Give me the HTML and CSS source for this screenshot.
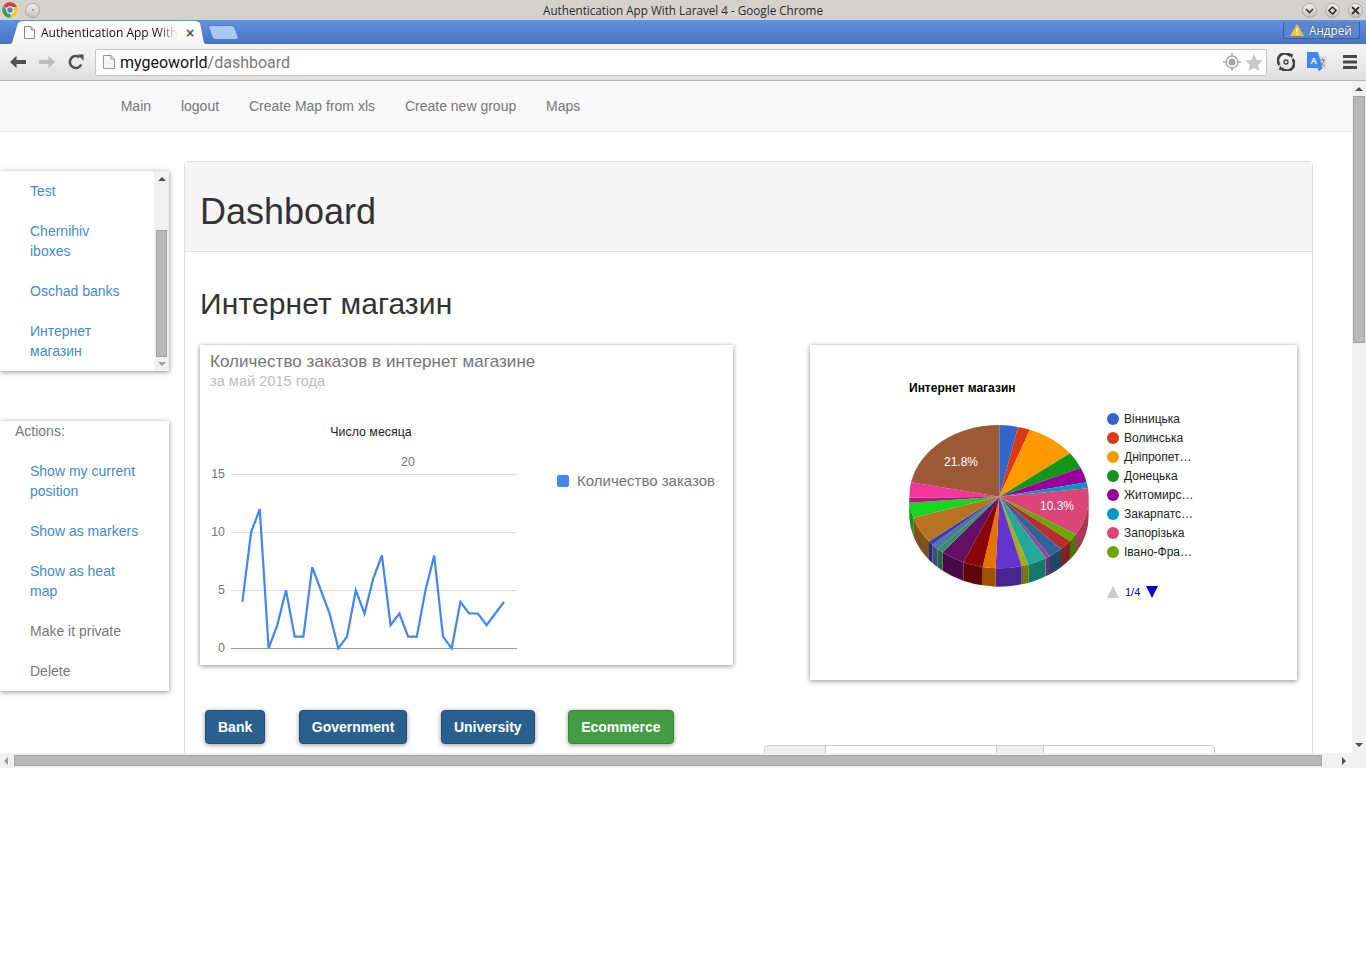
FILE: index.html
```html
<!DOCTYPE html>
<html lang="ru">
<head>
  <meta charset="UTF-8">
  <title>Authentication App With Laravel 4</title>
  <link rel="stylesheet" href="styles.css">
</head>
<body>
  <div class="titlebar">
    <div class="title-side">
      <svg class="chrome-logo" width="16" height="16" viewBox="0 0 16 16">
        <path d="M8 8 L1.5 4 A7.6 7.6 0 0 1 15 5 L8 5 Z" fill="#d9412f"/>
        <path d="M8 8 L15 5 A7.6 7.6 0 0 1 8.5 15.6 L11 9 Z" fill="#f6c731"/>
        <path d="M8 8 L8.5 15.6 A7.6 7.6 0 0 1 1.5 4 L5 9.5 Z" fill="#3f9d4a"/>
        <circle cx="8" cy="8" r="3.7" fill="#fff"/>
        <circle cx="8" cy="8" r="2.8" fill="#4a80dd"/>
      </svg>
      <span class="win-btn"><i class="win-dot"></i></span>
    </div>
    <div class="title-text">Authentication App With Laravel 4 - Google Chrome</div>
    <div class="title-side title-right">
      <span class="win-btn">
        <svg width="9" height="9" viewBox="0 0 9 9"><path d="M1 3 L4.5 6.5 L8 3" fill="none" stroke="#333" stroke-width="1.6"/></svg>
      </span>
      <span class="win-btn">
        <svg width="9" height="9" viewBox="0 0 9 9"><path d="M4.5 1 L8 4.5 L4.5 8 L1 4.5 Z" fill="none" stroke="#333" stroke-width="1.6"/></svg>
      </span>
      <span class="win-btn">
        <svg width="9" height="9" viewBox="0 0 9 9"><path d="M1 1 L8 8 M8 1 L1 8" fill="none" stroke="#333" stroke-width="1.8"/></svg>
      </span>
    </div>
  </div>

  <div class="tabstrip">
    <div class="tab">
      <svg width="11" height="13" viewBox="0 0 11 13"><path d="M.5 .5 H7 L10.5 4 V12.5 H.5 Z M7 .5 V4 H10.5" fill="#fff" stroke="#888"/></svg>
      <span class="tab-title">Authentication App With</span>
      <span class="tab-close">×</span>
    </div>
    <div class="newtab"></div>
    <div class="user-badge">
      <svg width="14" height="12" viewBox="0 0 14 12"><path d="M7 0 L14 12 H0 Z" fill="#fbc02d"/><path d="M6.3 4 H7.7 V8 H6.3 Z M6.3 9 H7.7 V10.4 H6.3 Z" fill="#fff"/></svg>
      <span>Андрей</span>
    </div>
  </div>

  <div class="toolbar">
    <span class="tool-btn">
      <svg width="16" height="14" viewBox="0 0 16 14"><path d="M0 7 L6.5 .8 V5 H16 V9 H6.5 V13.2 Z" fill="#505050"/></svg>
    </span>
    <span class="tool-btn">
      <svg width="16" height="14" viewBox="0 0 16 14"><path d="M16 7 L9.5 .8 V5 H0 V9 H9.5 V13.2 Z" fill="#bdbdbd"/></svg>
    </span>
    <span class="tool-btn">
      <svg width="16" height="16" viewBox="0 0 16 16"><path d="M13.3 10.5 A6 6 0 1 1 11.5 3.2" fill="none" stroke="#505050" stroke-width="2.6"/><path d="M9.5 .6 L15.5 .6 L15.5 6.8 Z" fill="#505050"/></svg>
    </span>
    <div class="address">
      <svg width="12" height="14" viewBox="0 0 12 14"><path d="M.5 .5 H8 L11.5 4 V13.5 H.5 Z M8 .5 V4 H11.5" fill="#f6f6f6" stroke="#999"/></svg>
      <span class="url"><b>mygeoworld</b><span class="url-path">/dashboard</span></span>
      <span class="address-icons">
        <svg width="18" height="18" viewBox="0 0 18 18"><circle cx="9" cy="9" r="6" fill="none" stroke="#aaa" stroke-width="1.5"/><circle cx="9" cy="9" r="3.6" fill="#a6a6a6"/><path d="M9 0 V4 M9 14 V18 M0 9 H4 M14 9 H18" stroke="#aaa" stroke-width="1.5"/></svg>
        <svg width="18" height="17" viewBox="0 0 18 17"><path d="M9 0 L11.6 5.8 L18 6.5 L13.2 10.8 L14.6 17 L9 13.8 L3.4 17 L4.8 10.8 L0 6.5 L6.4 5.8 Z" fill="#c8c8c8"/></svg>
      </span>
    </div>
    <div class="tools-right">
      <span class="tool-btn tool-small">
        <svg width="18" height="18" viewBox="0 0 18 18"><path d="M2.5 12 A7 7 0 0 1 13.5 3 M15.5 6 A7 7 0 0 1 4.5 15" fill="none" stroke="#404040" stroke-width="2.6"/><path d="M11.5 .5 L16 1 L15 5.5 Z M6.5 17.5 L2 17 L3 12.5 Z" fill="#404040"/><circle cx="9" cy="9" r="2" fill="none" stroke="#404040" stroke-width="1.3"/></svg>
      </span>
      <span class="tool-btn tool-small">
        <svg width="20" height="20" viewBox="0 0 20 20"><path d="M7 4 H19 V17 H7 Z" fill="#dcdcdc"/><path d="M0 0 H11 L15.5 16 L12 19.5 L10.5 16 H0 Z" fill="#4285f4"/><text class="translate-a" x="3.4" y="11.5">A</text><path d="M13 8 H18 M15.5 6.5 V8 M17 8 C16.5 11 15 13 13 14 M14 10 C14.8 12 16 13.5 18 14" fill="none" stroke="#7d8a8a" stroke-width="1"/></svg>
      </span>
      <span class="tool-btn tool-small tool-menu">
        <svg width="14" height="14" viewBox="0 0 14 14"><path d="M0 0 H14 V3 H0 Z M0 5.5 H14 V8.5 H0 Z M0 11 H14 V14 H0 Z" fill="#484848"/></svg>
      </span>
    </div>
  </div>

  <div class="viewport">
    <div class="page">
      <nav class="navbar">
        <a href="#">Main</a>
        <a href="#">logout</a>
        <a href="#">Create Map from xls</a>
        <a href="#">Create new group</a>
        <a href="#">Maps</a>
      </nav>

      <div class="content">
        <aside class="sidebar">
          <div class="side-box side-groups">
            <ul class="side-list">
              <li><a href="#">Test</a></li>
              <li><a href="#">Chernihiv iboxes</a></li>
              <li><a href="#">Oschad banks</a></li>
              <li><a href="#">Интернет магазин</a></li>
            </ul>
            <div class="mini-scroll">
              <span class="arrow-up"></span>
              <span class="mini-thumb"></span>
              <span class="arrow-down arrow-faint"></span>
            </div>
          </div>
          <div class="side-box side-actions">
            <div class="side-title">Actions:</div>
            <ul class="side-list">
              <li><a href="#">Show my current position</a></li>
              <li><a href="#">Show as markers</a></li>
              <li><a href="#">Show as heat map</a></li>
              <li><a href="#" class="muted">Make it private</a></li>
              <li><a href="#" class="muted">Delete</a></li>
            </ul>
          </div>
        </aside>

        <section class="panel">
          <div class="panel-head"><h1>Dashboard</h1></div>
          <div class="panel-body">
            <h2>Интернет магазин</h2>
            <div class="charts">
              <div class="card card-line">
                <div class="card-head">
                  <div class="card-title">Количество заказов в интернет магазине</div>
                  <div class="card-sub">за май 2015 года</div>
                </div>
                <svg class="chart" width="533" height="273" viewBox="200 392 533 273">
                  <text class="axis-title" x="371" y="436" text-anchor="middle">Число месяца</text>
                  <text class="axis" x="408" y="466" text-anchor="middle">20</text>
                  <path d="M231 474.5 H517 M231 532.5 H517 M231 590.5 H517" stroke="#ddd" fill="none"/>
                  <path d="M231 648.5 H517" stroke="#999" fill="none"/>
                  <text class="axis" x="225" y="478" text-anchor="end">15</text>
                  <text class="axis" x="225" y="536" text-anchor="end">10</text>
                  <text class="axis" x="225" y="594" text-anchor="end">5</text>
                  <text class="axis" x="225" y="652" text-anchor="end">0</text>
                  <polyline fill="none" stroke="#4285f4" stroke-width="2.2" points="242.4,601.9 251.1,532.3 259.8,509.1 268.6,648.3 277.3,625.1 286,590.3 294.7,636.7 303.4,636.7 312.2,567.1 320.9,590.3 329.6,613.5 338.3,648.3 347,636.7 355.8,590.3 364.5,613.5 373.2,578.7 381.9,555.5 390.6,625.1 399.4,613.5 408.1,636.7 416.8,636.7 425.5,590.3 434.2,555.5 443,636.7 451.7,648.3 460.4,601.9 469.1,613.5 477.8,613.5 486.6,625.1 495.3,613.5 504,601.9"/>
                  <rect x="557" y="475" width="12" height="12" rx="2" fill="#4285f4"/>
                  <text class="legend-line" x="577" y="486">Количество заказов</text>
                </svg>
              </div>

              <div class="card card-pie">
                <svg class="chart" width="487" height="335" viewBox="810 345 487 335">
                  <text class="pie-title" x="909" y="392">Интернет магазин</text>
                  <g transform="translate(900 420) scale(.3333)">
                    <!-- side wall -->
                    <path d="M566 230 A268 215 0 0 1 528 343 V398 A268 215 0 0 0 566 285 Z" fill="#a8375a"/>
                    <path d="M528 343 A268 215 0 0 1 510 363 V418 A268 215 0 0 0 528 398 Z" fill="#477700"/>
                    <path d="M510 363 A268 215 0 0 1 483 387 V442 A268 215 0 0 0 510 418 Z" fill="#812020"/>
                    <path d="M483 387 A268 215 0 0 1 450 408 V463 A268 215 0 0 0 483 442 Z" fill="#224568"/>
                    <path d="M450 408 A268 215 0 0 1 437 414 V469 A268 215 0 0 0 450 463 Z" fill="#6b306b"/>
                    <path d="M437 414 A268 215 0 0 1 385 434 V489 A268 215 0 0 0 437 469 Z" fill="#18776b"/>
                    <path d="M385 434 A268 215 0 0 1 365 438 V493 A268 215 0 0 0 385 489 Z" fill="#77770c"/>
                    <path d="M365 438 A268 215 0 0 1 287 445 V500 A268 215 0 0 0 365 493 Z" fill="#47248f"/>
                    <path d="M287 445 A268 215 0 0 1 248 441 V496 A268 215 0 0 0 287 500 Z" fill="#a15100"/>
                    <path d="M248 441 A268 215 0 0 1 190 427 V482 A268 215 0 0 0 248 496 Z" fill="#610505"/>
                    <path d="M190 427 A268 215 0 0 1 128 397 V452 A268 215 0 0 0 190 482 Z" fill="#470b48"/>
                    <path d="M128 397 A268 215 0 0 1 113 387 V442 A268 215 0 0 0 128 452 Z" fill="#236645"/>
                    <path d="M113 387 A268 215 0 0 1 97 374 V429 A268 215 0 0 0 113 442 Z" fill="#3b5174"/>
                    <path d="M97 374 A268 215 0 0 1 87 364 V419 A268 215 0 0 0 97 429 Z" fill="#292b78"/>
                    <path d="M87 364 A268 215 0 0 1 40 293 V348 A268 215 0 0 0 87 419 Z" fill="#805118"/>
                    <path d="M40 293 A268 215 0 0 1 28 240 V295 A268 215 0 0 0 40 348 Z" fill="#0f9616"/>
                    <!-- top -->
                    <path d="M298 230 L298 15 A268 215 0 0 1 354 21 Z" fill="#3366cc"/>
                    <path d="M298 230 L354 21 A268 215 0 0 1 390 29 Z" fill="#dc3912"/>
                    <path d="M298 230 L390 29 A268 215 0 0 1 510 100 Z" fill="#ff9900"/>
                    <path d="M298 230 L510 100 A268 215 0 0 1 542 143 Z" fill="#109618"/>
                    <path d="M298 230 L542 143 A268 215 0 0 1 560 187 Z" fill="#990099"/>
                    <path d="M298 230 L560 187 A268 215 0 0 1 564 205 Z" fill="#0099c6"/>
                    <path d="M298 230 L564 205 A268 215 0 0 1 528 343 Z" fill="#dd4477"/>
                    <path d="M298 230 L528 343 A268 215 0 0 1 510 363 Z" fill="#66aa00"/>
                    <path d="M298 230 L510 363 A268 215 0 0 1 483 387 Z" fill="#b82e2e"/>
                    <path d="M298 230 L483 387 A268 215 0 0 1 450 408 Z" fill="#316395"/>
                    <path d="M298 230 L450 408 A268 215 0 0 1 437 414 Z" fill="#994499"/>
                    <path d="M298 230 L437 414 A268 215 0 0 1 385 434 Z" fill="#22aa99"/>
                    <path d="M298 230 L385 434 A268 215 0 0 1 365 438 Z" fill="#aaaa11"/>
                    <path d="M298 230 L365 438 A268 215 0 0 1 287 445 Z" fill="#6633cc"/>
                    <path d="M298 230 L287 445 A268 215 0 0 1 248 441 Z" fill="#e67300"/>
                    <path d="M298 230 L248 441 A268 215 0 0 1 190 427 Z" fill="#8b0707"/>
                    <path d="M298 230 L190 427 A268 215 0 0 1 128 397 Z" fill="#651067"/>
                    <path d="M298 230 L128 397 A268 215 0 0 1 113 387 Z" fill="#329262"/>
                    <path d="M298 230 L113 387 A268 215 0 0 1 97 374 Z" fill="#5574a6"/>
                    <path d="M298 230 L97 374 A268 215 0 0 1 87 364 Z" fill="#3b3eac"/>
                    <path d="M298 230 L87 364 A268 215 0 0 1 40 293 Z" fill="#b77322"/>
                    <path d="M298 230 L40 293 A268 215 0 0 1 28 248 Z" fill="#16d620"/>
                    <path d="M298 230 L28 248 A268 215 0 0 1 28 233 Z" fill="#b91383"/>
                    <path d="M298 230 L28 233 A268 215 0 0 1 33 187 Z" fill="#f4359e"/>
                    <path d="M298 230 L33 187 A268 215 0 0 1 298 15 Z" fill="#9c5935"/>
                  </g>
                  <text class="pie-label" x="961" y="466" text-anchor="middle">21.8%</text>
                  <text class="pie-label" x="1057" y="510" text-anchor="middle">10.3%</text>

                  <circle cx="1113" cy="419" r="6" fill="#3366cc"/>
                  <text class="pie-legend" x="1124" y="423">Вінницька</text>
                  <circle cx="1113" cy="438" r="6" fill="#dc3912"/>
                  <text class="pie-legend" x="1124" y="442">Волинська</text>
                  <circle cx="1113" cy="457" r="6" fill="#ff9900"/>
                  <text class="pie-legend" x="1124" y="461">Дніпропет…</text>
                  <circle cx="1113" cy="476" r="6" fill="#109618"/>
                  <text class="pie-legend" x="1124" y="480">Донецька</text>
                  <circle cx="1113" cy="495" r="6" fill="#990099"/>
                  <text class="pie-legend" x="1124" y="499">Житомирс…</text>
                  <circle cx="1113" cy="514" r="6" fill="#0099c6"/>
                  <text class="pie-legend" x="1124" y="518">Закарпатс…</text>
                  <circle cx="1113" cy="533" r="6" fill="#dd4477"/>
                  <text class="pie-legend" x="1124" y="537">Запорізька</text>
                  <circle cx="1113" cy="552" r="6" fill="#66aa00"/>
                  <text class="pie-legend" x="1124" y="556">Івано-Фра…</text>

                  <path d="M1107 598 L1113 586 L1119 598 Z" fill="#ccc"/>
                  <text class="pie-pager" x="1125" y="596">1/4</text>
                  <path d="M1146 586 L1158 586 L1152 598 Z" fill="#0000cc"/>
                </svg>
              </div>
            </div>

            <div class="type-buttons">
              <button>Bank</button>
              <button>Government</button>
              <button>University</button>
              <button class="btn-active">Ecommerce</button>
            </div>

            <div class="stats-head">
              <span class="stats-th stats-w1"></span>
              <span class="stats-td stats-w2"></span>
              <span class="stats-th stats-w3"></span>
              <span class="stats-td stats-w4"></span>
            </div>
          </div>
        </section>
      </div>
    </div>

    <div class="vscroll">
      <span class="arrow-up"></span>
      <span class="vthumb"></span>
      <span class="arrow-down"></span>
    </div>
  </div>

  <div class="hscroll">
    <span class="arrow-left"></span>
    <span class="hthumb"></span>
    <span class="arrow-right"></span>
  </div>
</body>
</html>
```

FILE: styles.css
```css
* {
  box-sizing: border-box;
}
html, body {
  margin: 0;
  padding: 0;
}
body {
  width: 1366px;
  height: 964px;
  overflow: hidden;
  background: #fff;
  font-family: "Liberation Sans", Arial, sans-serif;
  font-size: 14px;
  color: #333;
}
a {
  text-decoration: none;
}

/* window chrome */
.titlebar {
  display: flex;
  align-items: center;
  height: 20px;
  background: #d5d1cd;
  padding: 0 2px;
}
.title-side {
  display: flex;
  align-items: center;
  gap: 7px;
  width: 70px;
}
.title-right {
  justify-content: flex-end;
  gap: 8px;
  padding-right: 1px;
}
.title-text {
  flex: 1;
  text-align: center;
  font-family: "Open Sans", sans-serif;
  font-size: 11.7px;
  color: #2b2b2b;
}
.win-btn {
  display: flex;
  align-items: center;
  justify-content: center;
  width: 15px;
  height: 15px;
  border-radius: 50%;
  background: linear-gradient(#f4f2f0, #c4c0bc);
  border: 1px solid #aaa6a2;
}
.win-dot {
  width: 2px;
  height: 2px;
  background: #888;
  border-radius: 50%;
}

.tabstrip {
  display: flex;
  align-items: flex-start;
  height: 24px;
  padding-left: 8px;
  background: linear-gradient(#6192de, #4972c3);
  position: relative;
}
.tab {
  display: flex;
  align-items: center;
  width: 200px;
  height: 24px;
  margin-top: 1px;
  padding: 0 8px 2px 16px;
  background: linear-gradient(#fff, #f5f5f5);
  clip-path: polygon(0 100%, 2% 92%, 5% 8%, 7% 0, 94% 0, 96% 8%, 98% 92%, 100% 100%);
  font-family: "Open Sans", sans-serif;
  font-size: 12px;
  color: #111;
}
.tab-title {
  width: 137px;
  margin-left: 6px;
  white-space: nowrap;
  overflow: hidden;
  -webkit-mask-image: linear-gradient(to right, #000 85%, transparent);
  mask-image: linear-gradient(to right, #000 85%, transparent);
}
.tab-close {
  margin: 2px 0 0 8px;
  font-family: "Liberation Sans", sans-serif;
  font-size: 14px;
  font-weight: bold;
  color: #555;
}
.newtab {
  width: 27px;
  height: 15px;
  margin: 5px 0 0 2px;
  background: #a9c9f3;
  border: 1px solid #4f7cc6;
  border-radius: 3px;
  transform: skewX(20deg);
}
.user-badge {
  display: flex;
  align-items: center;
  gap: 5px;
  height: 17px;
  width: 77px;
  margin: 2px 6px 0 auto;
  padding-left: 6px;
  border: 1px solid #37619f;
  border-top: none;
  border-radius: 0 0 3px 3px;
  background: #5a86d0;
  font-family: "Open Sans", sans-serif;
  font-size: 11.7px;
  color: #fff;
  text-shadow: 0 0 2px #333;
}

.toolbar {
  display: flex;
  align-items: center;
  height: 37px;
  padding: 0 0 0 3px;
  background: linear-gradient(#f6f6f6, #dfdfdf);
  border-bottom: 1px solid #b5b5b5;
}
.tool-btn {
  display: flex;
  align-items: center;
  justify-content: center;
  width: 29px;
  height: 26px;
}
.address {
  display: flex;
  align-items: center;
  width: 1172px;
  height: 27px;
  margin-left: 4.5px;
  padding: 0 3px 0 7px;
  background: #fff;
  border: 1px solid #c6c6c6;
  border-radius: 2px;
}
.url {
  margin-left: 5.5px;
  font-family: Roboto, sans-serif;
  font-size: 16px;
  color: #111;
}
.url b {
  font-weight: normal;
}
.url-path {
  color: #7a7a7a;
}
.address-icons {
  display: flex;
  align-items: center;
  gap: 4px;
  margin-left: auto;
}
.tools-right {
  display: flex;
  padding-left: 4px;
}
.tool-small {
  width: 31px;
}
.tool-menu {
  margin-left: 2px;
}
.translate-a {
  font-family: "Liberation Sans", sans-serif;
  font-size: 9px;
  font-weight: bold;
  fill: #fff;
}

/* page area */
.viewport {
  display: flex;
  height: 672px;
}
.page {
  flex: 1;
  min-width: 0;
  overflow: hidden;
}
.navbar {
  display: flex;
  gap: 29.9px;
  height: 51px;
  padding: 15px 0 0 120.7px;
  background: #f8f8f8;
  border-bottom: 1px solid #e7e7e7;
  line-height: 20px;
}
.navbar a {
  color: #777;
}
.content {
  display: flex;
  align-items: flex-start;
}
.sidebar {
  width: 169px;
  flex: none;
}
.side-box {
  position: relative;
  background: #fff;
  box-shadow: 0 1px 5px rgba(0, 0, 0, .45);
}
.side-groups {
  height: 200px;
  margin-top: 39px;
  overflow: hidden;
}
.side-actions {
  margin-top: 50px;
}
.side-title {
  padding-left: 15px;
  line-height: 20px;
  margin-bottom: 10px;
  color: #777;
}
.side-list {
  list-style: none;
  margin: 0;
  padding: 0 15px 0 0;
}
.side-list li {
  padding: 10px 0 10px 30px;
  line-height: 20px;
}
.side-list a {
  color: #428bca;
}
.side-list a.muted {
  color: #777;
}
.side-groups .side-list li {
  padding-right: 30px;
}
.side-actions .side-list {
  padding-right: 0;
}
.side-actions .side-list li {
  padding-right: 29px;
}
.mini-scroll {
  position: absolute;
  top: 0;
  right: 0;
  bottom: 0;
  display: flex;
  flex-direction: column;
  align-items: center;
  width: 15px;
  background: #f1f1f1;
}
.mini-thumb {
  width: 11px;
  height: 127px;
  margin-top: 49px;
  background: #b8b8b8;
  border: 1px solid #a2a2a2;
}
.mini-scroll .arrow-up {
  margin-top: 6px;
}
.mini-scroll .arrow-down {
  margin-top: 5px;
}

.arrow-up, .arrow-down {
  width: 0;
  height: 0;
  border-left: 4px solid transparent;
  border-right: 4px solid transparent;
}
.arrow-up {
  border-bottom: 4px solid #505050;
}
.arrow-down {
  border-top: 4px solid #505050;
}
.arrow-faint {
  border-top-color: #999;
}
.arrow-left, .arrow-right {
  width: 0;
  height: 0;
  border-top: 4px solid transparent;
  border-bottom: 4px solid transparent;
}
.arrow-left {
  border-right: 4px solid #999;
}
.arrow-right {
  border-left: 4px solid #505050;
}

.panel {
  width: 1129px;
  flex: none;
  margin: 29px 0 0 15px;
  border: 1px solid #ddd;
  border-radius: 4px 4px 0 0;
  background: #fff;
}
.panel-head {
  height: 90px;
  background: #f5f5f5;
  border-bottom: 1px solid #ddd;
  padding-left: 15px;
}
.panel-head h1 {
  margin: 0;
  padding-top: 30px;
  font-size: 36px;
  font-weight: 500;
  line-height: 40px;
}
.panel-body {
  padding: 35px 15px 0;
}
.panel-body h2 {
  margin: 0 0 25px;
  font-size: 30px;
  font-weight: 500;
  line-height: 33px;
  letter-spacing: .13px;
}
.charts {
  display: flex;
  align-items: flex-start;
  gap: 77px;
}
.card {
  flex: none;
  background: #fff;
  box-shadow: 0 1px 5px rgba(0, 0, 0, .45);
}
.card-line {
  width: 533px;
  height: 320px;
}
.card-pie {
  width: 487px;
  height: 335px;
}
.card-head {
  height: 47px;
  padding: 7px 10px 0;
}
.card-title {
  font-size: 17px;
  line-height: 19px;
  letter-spacing: .05px;
  color: #757575;
}
.card-sub {
  font-size: 14.6px;
  line-height: 20px;
  color: #bdbdbd;
}
.chart {
  display: block;
}
.axis-title {
  font-size: 12.4px;
  fill: #222;
}
.axis {
  font-size: 12.4px;
  fill: #757575;
}
.legend-line {
  font-size: 15px;
  fill: #757575;
}
.pie-title {
  font-size: 12px;
  font-weight: bold;
  fill: #000;
}
.pie-label {
  font-size: 12px;
  fill: #fff;
}
.pie-legend {
  font-size: 12px;
  fill: #222;
}
.pie-pager {
  font-size: 11px;
  fill: #0000cc;
}

.type-buttons {
  display: flex;
  gap: 33.6px;
  margin: 30px 0 0 5px;
}
.type-buttons button {
  height: 34px;
  padding: 0 12px;
  background: #2a6090;
  border: 1px solid #204d74;
  border-radius: 4px;
  box-shadow: 0 1px 5px rgba(0, 0, 0, .4);
  font-family: "Liberation Sans", sans-serif;
  font-size: 14px;
  font-weight: bold;
  color: #fff;
}
.type-buttons .btn-active {
  background: #449d44;
  border-color: #398439;
}
.stats-head {
  display: flex;
  width: 451px;
  height: 30px;
  margin: 1px 0 0 564px;
  border: 1px solid #ccc;
  border-radius: 4px 4px 0 0;
  overflow: hidden;
}
.stats-th {
  background: #eee;
}
.stats-td, .stats-th {
  border-right: 1px solid #ccc;
}
.stats-w1 { width: 61px; }
.stats-w2 { width: 171px; }
.stats-w3 { width: 47px; }
.stats-w4 { flex: 1; border-right: none; }

.vscroll {
  display: flex;
  flex-direction: column;
  align-items: center;
  width: 14px;
  flex: none;
  background: #f1f1f1;
}
.vscroll .arrow-up {
  margin-top: 6px;
}
.vthumb {
  width: 12px;
  height: 247px;
  margin-top: 5px;
  background: #b8b8b8;
  border: 1px solid #a2a2a2;
}
.vscroll .arrow-down {
  margin-top: auto;
  margin-bottom: 6px;
}
.hscroll {
  display: flex;
  align-items: center;
  height: 15px;
  padding-left: 4px;
  background: #f1f1f1;
}
.hthumb {
  width: 1308px;
  height: 11px;
  margin-left: 6px;
  background: #b8b8b8;
  border: 1px solid #a2a2a2;
}
.arrow-right {
  margin-left: 20px;
}
```
